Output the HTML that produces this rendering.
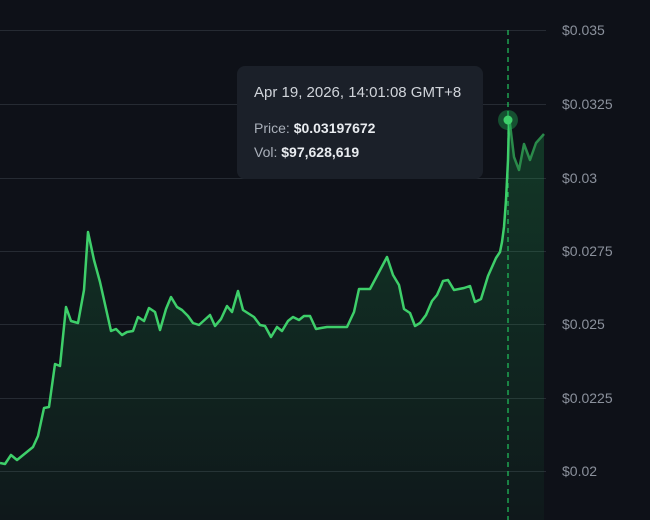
<!DOCTYPE html>
<html><head><style>
body{margin:0;width:650px;height:520px;background:#0e1118;overflow:hidden;font-family:"Liberation Sans",sans-serif;position:relative}
.l{position:absolute;left:562px;color:#8b919c;font-size:14px}
.tt{position:absolute;left:237px;top:66px;width:246px;height:113px;background:#1b2029;border-radius:8px;color:#aab0ba;font-size:14px}
.tt b{color:#e8ebef}
</style></head><body>
<svg width="650" height="520" style="position:absolute;left:0;top:0">
<defs><linearGradient id="g" x1="0" y1="0" x2="0" y2="1"><stop offset="0" stop-color="#22c55e" stop-opacity=".22"/><stop offset="1" stop-color="#22c55e" stop-opacity=".04"/></linearGradient></defs>
<g stroke="#262b33" stroke-width="1">
<line x1="0" x2="546" y1="30.5" y2="30.5"/><line x1="0" x2="546" y1="104.5" y2="104.5"/><line x1="0" x2="546" y1="178.5" y2="178.5"/><line x1="0" x2="546" y1="251.5" y2="251.5"/><line x1="0" x2="546" y1="324.5" y2="324.5"/><line x1="0" x2="546" y1="398.5" y2="398.5"/><line x1="0" x2="546" y1="471.5" y2="471.5"/>
</g>
<path fill="url(#g)" d="M0,463 5,464 11,455 17,460 33,447 38,436 44,408 49,407 55,364 60,366 66,307 71,321 78,323 84,290 88,232 94,260 100,282 111,331 116,329 122,335 127,332 133,331 138,317 144,321 149,308 155,312 160,330 166,309 171,297 177,307 182,310 188,316 193,323 199,325 210,315 215,326 221,319 227,306 232,312 238,291 243,310 254,317 260,325 265,326 271,337 277,327 282,331 288,321 293,317 299,320 304,316 310,316 316,329 321,328 327,327 347,327 354,312 359,289 370,289 387,257 393,275 399,285 404,309 410,313 415,326 420,323 426,315 432,301 437,295 441,286 443,281 448,280 454,290 464,288 470,286 475,302 481,299 488,276 496,258 500,252 502,242 504,227 506,200 508,160 509,120 510,124 514,157 519,170 524,144 530,160 536,143 544,134 L544,520 0,520Z"/>
<line x1="508" x2="508" y1="30" y2="520" stroke="#22c55e" stroke-width="1.2" stroke-dasharray="5,4"/>
<polyline fill="none" stroke="#3ecf6a" stroke-width="2.5" stroke-linejoin="round" points="0,463 5,464 11,455 17,460 33,447 38,436 44,408 49,407 55,364 60,366 66,307 71,321 78,323 84,290 88,232 94,260 100,282 111,331 116,329 122,335 127,332 133,331 138,317 144,321 149,308 155,312 160,330 166,309 171,297 177,307 182,310 188,316 193,323 199,325 210,315 215,326 221,319 227,306 232,312 238,291 243,310 254,317 260,325 265,326 271,337 277,327 282,331 288,321 293,317 299,320 304,316 310,316 316,329 321,328 327,327 347,327 354,312 359,289 370,289 387,257 393,275 399,285 404,309 410,313 415,326 420,323 426,315 432,301 437,295 441,286 443,281 448,280 454,290 464,288 470,286 475,302 481,299 488,276 496,258 500,252 502,242 504,227 506,200 508,160 509,120"/>
<polyline fill="none" stroke="#2a8a4a" stroke-width="2.5" stroke-linejoin="round" points="509,120 510,124 514,157 519,170 524,144 530,160 536,143 544,134"/>
<circle cx="508" cy="120" r="10" fill="#22c55e" fill-opacity=".35"/>
<circle cx="508" cy="120" r="4.5" fill="#3ecf6a"/>
</svg>
<div class="l" style="top:22px">$0.035</div>
<div class="l" style="top:96px">$0.0325</div>
<div class="l" style="top:170px">$0.03</div>
<div class="l" style="top:243px">$0.0275</div>
<div class="l" style="top:316px">$0.025</div>
<div class="l" style="top:390px">$0.0225</div>
<div class="l" style="top:463px">$0.02</div>
<div class="tt">
<div style="position:absolute;left:17px;top:18px;color:#d0d4da;font-size:15px">Apr 19, 2026, 14:01:08 GMT+8</div>
<div style="position:absolute;left:17px;top:54px">Price: <b>$0.03197672</b></div>
<div style="position:absolute;left:17px;top:78px">Vol: <b>$97,628,619</b></div>
</div>
</body></html>
